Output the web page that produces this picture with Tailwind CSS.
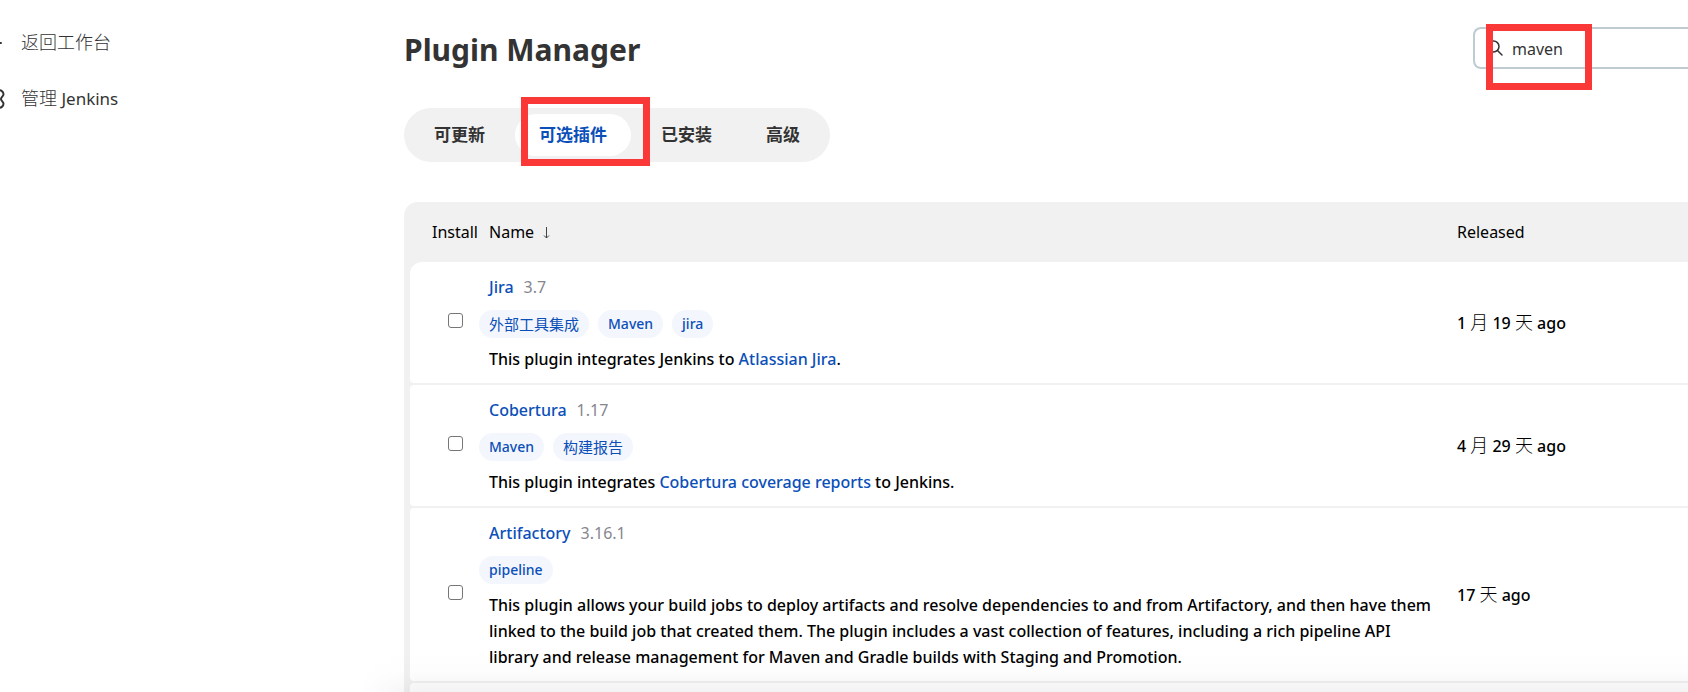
<!DOCTYPE html>
<html lang="zh-CN">
<head>
<meta charset="utf-8">
<title>Plugin Manager</title>
<script src="https://cdn.jsdelivr.net/npm/@tailwindcss/browser@4"></script>
</head>
<body class="relative flex h-screen overflow-hidden bg-white font-['Noto_Sans','Noto_Sans_CJK_SC',sans-serif] text-[16px] leading-[26px] font-medium text-black">
<nav class="w-[404px] shrink-0 pt-[29px] text-[#333]" aria-label="侧栏">
  <ul class="-ml-[19px] flex flex-col gap-[30px]">
    <li><a href="#" class="flex items-center gap-[16px]">
      <svg class="size-6 shrink-0" viewBox="0 0 24 24" fill="none" stroke="currentColor" stroke-width="2" stroke-linecap="round" stroke-linejoin="round"><path d="M10 6l-7 7 7 7M4 13h16"/></svg><span class="text-[18px] font-light">返回工作台</span></a></li>
    <li><a href="#" class="flex items-center gap-[16px]">
      <svg class="size-6 shrink-0" viewBox="0 0 24 24" fill="none" stroke="currentColor" stroke-width="2" stroke-linejoin="round" stroke-linecap="round"><circle cx="12" cy="12" r="3.500"/><path d="M17 3.500c3-.8 5.500 1.200 5.500 3.800 0 2-2.500 2.700-2.500 4.700s2.500 2.700 2.500 4.700c0 2.600-2.500 4.600-5.500 3.800l-2-.5-1 2.500h-4l-1-2.500-2 .5c-3 .8-5.500-1.200-5.500-3.800 0-2 2.500-2.700 2.500-4.700S1.500 9.300 1.500 7.300C1.500 4.700 4 2.700 7 3.500L9 4l1-2.500h4L15 4z"/></svg><span class="text-[17px] font-normal"><span class="text-[18px] font-light">管理</span> Jenkins</span></a></li>
  </ul>
</nav>
<main class="min-w-0 flex-1 pt-[27px]">
  <header class="flex h-[42px] items-center justify-between">
    <h1 class="pt-[4px] text-[30px] leading-[38px] font-bold text-[#333]">Plugin Manager</h1>
    <div class="relative w-[215px]">
      <label class="flex h-[42px] items-center gap-[8px] rounded-l-lg border-2 border-r-0 border-[#bfcbd0] pl-[12px] text-[#333]">
        <svg class="size-[17px] shrink-0" viewBox="0 0 17 17" fill="none" stroke="currentColor" stroke-width="1.500" stroke-linecap="round"><circle cx="6.500" cy="6.500" r="5.500"/><path d="M10.500 10.500l4.500 4.500"/></svg>
        <input type="search" value="maven" aria-label="搜索插件" class="w-full min-w-0 bg-transparent pt-[2px] font-normal outline-none">
      </label>
      <span class="pointer-events-none absolute -top-[3px] left-[13px] h-[66px] w-[106px] border-[7px] border-[#fb3838]"></span>
    </div>
  </header>
  <div class="mt-[39px] flex">
    <div class="flex gap-[6px] rounded-full bg-[#f1f1f1] p-[6px] text-[17px] leading-[42px] font-bold text-[#333]">
      <a href="#" class="rounded-full px-6">可更新</a>
      <span class="relative"><a href="#" class="block rounded-full bg-white px-6 text-[#0b4fb9]">可选插件</a>
        <span class="pointer-events-none absolute -top-[17px] left-[6px] h-[69px] w-[129px] border-[7px] border-[#fb3838]"></span></span>
      <a href="#" class="rounded-full px-6">已安装</a>
      <a href="#" class="rounded-full px-6">高级</a>
    </div>
  </div>
  <div class="mt-[40px] rounded-tl-[14px] bg-[#f1f1f1] pl-[6px]">
    <table class="w-full table-fixed border-separate border-spacing-x-0 border-spacing-y-[2px]">
      <colgroup><col class="w-[79px]"><col><col class="w-[231px]"></colgroup>
      <thead><tr class="h-[56px] text-left">
        <th class="pl-[22px] font-normal">Install</th>
        <th class="font-normal">Name
          <svg class="ml-[5px] inline-block h-[13px] w-[7px] align-[-1px]" viewBox="0 0 7 13" fill="none" stroke="#444" aria-hidden="true"><path d="M3.500 1v11M1 9.500L3.500 12 6 9.500"/></svg></th>
        <th class="font-normal">Released</th>
      </tr></thead>
      <tbody>
        <tr>
          <td class="rounded-l-[4px] rounded-tl-[12px] bg-white pb-[4px] pl-[38px]"><input type="checkbox" aria-label="Jira" class="block size-[15px] appearance-none rounded-[3px] border border-[#767676] bg-white"></td>
          <td class="bg-white pt-[12px] pr-[20px] pb-[11px]">
            <div class="flex gap-[10px]"><a href="#" class="text-[#0b4fb9]">Jira</a><span class="font-normal text-[#86868e]">3.7</span></div>
            <div class="mt-[10px] mb-[8px] -ml-[10px] flex gap-[9px] text-[14px] leading-[28px] text-[#0b4fb9]"><a href="#" class="rounded-full bg-[#f3f6fc] px-[10px] text-[15px] font-normal">外部工具集成</a><a href="#" class="rounded-full bg-[#f3f6fc] px-[10px]">Maven</a><a href="#" class="rounded-full bg-[#f3f6fc] px-[10px]">jira</a></div>
            <div>This plugin integrates Jenkins to <a href="#" class="text-[#0b4fb9]">Atlassian Jira</a>.</div>
          </td>
          <td class="bg-white">1 <span class="text-[18px] font-light">月</span> 19 <span class="text-[18px] font-light">天</span> ago</td>
        </tr>
        <tr>
          <td class="rounded-l-[4px] bg-white pb-[4px] pl-[38px]"><input type="checkbox" aria-label="Cobertura" class="block size-[15px] appearance-none rounded-[3px] border border-[#767676] bg-white"></td>
          <td class="bg-white pt-[12px] pr-[20px] pb-[11px]">
            <div class="flex gap-[10px]"><a href="#" class="text-[#0b4fb9]">Cobertura</a><span class="font-normal text-[#86868e]">1.17</span></div>
            <div class="mt-[10px] mb-[8px] -ml-[10px] flex gap-[9px] text-[14px] leading-[28px] text-[#0b4fb9]"><a href="#" class="rounded-full bg-[#f3f6fc] px-[10px]">Maven</a><a href="#" class="rounded-full bg-[#f3f6fc] px-[10px] text-[15px] font-normal">构建报告</a></div>
            <div>This plugin integrates <a href="#" class="text-[#0b4fb9]">Cobertura coverage reports</a> to Jenkins.</div>
          </td>
          <td class="bg-white">4 <span class="text-[18px] font-light">月</span> 29 <span class="text-[18px] font-light">天</span> ago</td>
        </tr>
        <tr>
          <td class="rounded-l-[4px] bg-white pb-[4px] pl-[38px]"><input type="checkbox" aria-label="Artifactory" class="block size-[15px] appearance-none rounded-[3px] border border-[#767676] bg-white"></td>
          <td class="bg-white pt-[12px] pr-[20px] pb-[11px]">
            <div class="flex gap-[10px]"><a href="#" class="text-[#0b4fb9]">Artifactory</a><span class="font-normal text-[#86868e]">3.16.1</span></div>
            <div class="mt-[10px] mb-[8px] -ml-[10px] flex gap-[9px] text-[14px] leading-[28px] text-[#0b4fb9]"><a href="#" class="rounded-full bg-[#f3f6fc] px-[10px]">pipeline</a></div>
            <div>This plugin allows your build jobs to deploy artifacts and resolve dependencies to and from Artifactory, and then have them linked to the build job that created them. The plugin includes a vast collection of features, including a rich pipeline API library and release management for Maven and Gradle builds with Staging and Promotion.</div>
          </td>
          <td class="bg-white">17 <span class="text-[18px] font-light">天</span> ago</td>
        </tr>
        <tr class="h-[121px]"><td class="rounded-l-[4px] bg-white"></td><td class="bg-white"></td><td class="bg-white"></td></tr>
      </tbody>
    </table>
  </div>
</main>
<div class="pointer-events-none absolute right-0 bottom-0 left-[360px] h-[40px] bg-linear-to-b from-black/0 via-black/1 to-black/5 [mask-image:linear-gradient(to_right,transparent,black_60px)]"></div>
</body>
</html>
